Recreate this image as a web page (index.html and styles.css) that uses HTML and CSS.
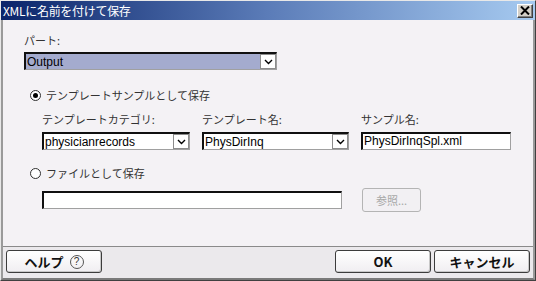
FILE: index.html
```html
<!DOCTYPE html>
<html lang="ja">
<head>
  <meta charset="UTF-8" />
  <title>XMLに名前を付けて保存</title>
  <link rel="stylesheet" href="styles.css">
</head>
<body>

<div class="window">

  <div class="titlebar">
    <span class="title">XMLに名前を付けて保存</span>
    <button class="close-btn" title="閉じる">
      <svg width="10" height="9" viewBox="0 0 10 9">
        <path d="M1 0.5 L9 8.5 M9 0.5 L1 8.5" stroke="#000" stroke-width="2" fill="none" />
      </svg>
    </button>
  </div>

  <div class="main">
    <div class="content">

      <!-- Part selector -->
      <div class="label">パート:</div>
      <div class="select part-select selected">
        <span class="select-text">Output</span>
        <span class="arrow">
          <svg width="9" height="6" viewBox="0 0 9 6"><path d="M1 1 L4.5 4.5 L8 1" stroke="#000" stroke-width="1.4" fill="none" /></svg>
        </span>
      </div>

      <!-- Save as template sample -->
      <div class="radio-row first-radio">
        <span class="radio checked"></span>
        <span>テンプレートサンプルとして保存</span>
      </div>

      <div class="sample-grid">
        <div class="label">テンプレートカテゴリ:</div>
        <div class="label">テンプレート名:</div>
        <div class="label">サンプル名:</div>

        <div class="select">
          <span class="select-text">physicianrecords</span>
          <span class="arrow">
            <svg width="9" height="6" viewBox="0 0 9 6"><path d="M1 1 L4.5 4.5 L8 1" stroke="#000" stroke-width="1.4" fill="none" /></svg>
          </span>
        </div>
        <div class="select">
          <span class="select-text">PhysDirInq</span>
          <span class="arrow">
            <svg width="9" height="6" viewBox="0 0 9 6"><path d="M1 1 L4.5 4.5 L8 1" stroke="#000" stroke-width="1.4" fill="none" /></svg>
          </span>
        </div>
        <div class="textbox">PhysDirInqSpl.xml</div>
      </div>

      <!-- Save as file -->
      <div class="radio-row second-radio">
        <span class="radio"></span>
        <span>ファイルとして保存</span>
      </div>

      <div class="file-row">
        <div class="textbox file-box"></div>
        <button class="browse-btn" disabled>参照...</button>
      </div>

    </div>

    <div class="footer">
      <button class="btn">ヘルプ <span class="help-icon">?</span></button>
      <div class="spacer"></div>
      <button class="btn">OK</button>
      <button class="btn">キャンセル</button>
    </div>
  </div>

</div>

</body>
</html>
```

FILE: styles.css
```css
body {
  margin: 0;
  font-family: "Noto Sans CJK JP", "Liberation Sans", sans-serif;
  font-size: 11px;
  color: #000;
  background: #d4d0c8;
}

.window {
  box-sizing: border-box;
  width: 536px;
  height: 281px;
  display: flex;
  flex-direction: column;
  background: #d4d0c8;
  border-top: 1px solid #e8e8e8;
  border-left: 1px solid #e8e8e8;
  border-right: 1px solid #404040;
  border-bottom: 1px solid #404040;
}

.titlebar {
  height: 19px;
  display: flex;
  align-items: center;
  justify-content: space-between;
  padding: 0 2px 0 2px;
  background: linear-gradient(to right, #0a246a 0%, #5b7cb8 50%, #a6caf0 100%);
}

.title {
  color: #fff;
  font-size: 12px;
  letter-spacing: -0.3px;
  line-height: 19px;
}

.close-btn {
  width: 16px;
  height: 14px;
  padding: 0;
  display: flex;
  align-items: center;
  justify-content: center;
  background: #d4d0c8;
  border: 1px solid;
  border-color: #fff #404040 #404040 #fff;
  box-shadow: inset -1px -1px 0 #808080;
}

.main {
  flex: 1;
  display: flex;
  flex-direction: column;
  border-left: 2px solid #9a9a9a;
  border-right: 2px solid #9a9a9a;
  border-bottom: 2px solid #7a7a7a;
}

.content {
  flex: 1;
  background: #f4f2f5;
  padding: 13px 0 0 21px;
}

.label {
  height: 14px;
  line-height: 14px;
  color: #333;
}

.select {
  box-sizing: border-box;
  height: 18px;
  display: flex;
  align-items: center;
  background: #fff;
  border: 1px solid #a0a0a0;
  border-top: 2px solid #101010;
  border-left: 2px solid #101010;
  font-family: "Liberation Sans", sans-serif;
  font-size: 12px;
}

.select-text {
  flex: 1;
  padding-left: 1px;
  line-height: 14px;
}

.select .arrow {
  box-sizing: border-box;
  width: 16px;
  height: 15px;
  display: flex;
  align-items: center;
  justify-content: center;
  background: #fff;
  border: 1px solid #8c8c8c;
}

.part-select {
  width: 253px;
  margin-top: 5px;
}

.selected {
  background: #a4abce;
}

.radio-row {
  display: flex;
  align-items: center;
  gap: 5px;
  height: 14px;
  padding-left: 6px;
  color: #333;
}

.first-radio {
  margin-top: 18px;
}

.second-radio {
  margin-top: 16px;
}

.radio {
  box-sizing: border-box;
  width: 11px;
  height: 11px;
  border: 1px solid #303030;
  border-radius: 50%;
  background: #fff;
  display: flex;
  align-items: center;
  justify-content: center;
}

.radio.checked::after {
  content: "";
  width: 5px;
  height: 5px;
  border-radius: 50%;
  background: #000;
}

.sample-grid {
  display: grid;
  grid-template-columns: 148px 147px 150px;
  column-gap: 12px;
  row-gap: 6px;
  margin-top: 10px;
  padding-left: 18px;
}

.textbox {
  box-sizing: border-box;
  height: 18px;
  background: #fff;
  border: 1px solid #a0a0a0;
  border-top: 2px solid #101010;
  border-left: 2px solid #101010;
  font-family: "Liberation Sans", sans-serif;
  font-size: 12px;
  line-height: 14px;
  padding-left: 1px;
}

.file-row {
  display: flex;
  align-items: center;
  gap: 20px;
  margin-top: 8px;
  padding-left: 18px;
}

.file-box {
  width: 300px;
}

.browse-btn {
  width: 59px;
  height: 24px;
  padding: 0;
  font-family: "Noto Sans CJK JP", sans-serif;
  font-size: 11px;
  color: #a8a8a8;
  background: #f2f0f3;
  border: 1px solid #b4b4b4;
  border-radius: 3px;
}

.footer {
  height: 28px;
  display: flex;
  align-items: flex-start;
  gap: 3px;
  padding: 3px 3px 0 3px;
  background: #ebe9ec;
  border-top: 1px solid #8a8a8a;
}

.spacer {
  flex: 1;
}

.btn {
  width: 96px;
  height: 23px;
  padding: 0;
  display: flex;
  align-items: center;
  justify-content: center;
  gap: 6px;
  font-family: "Noto Sans CJK JP", "Liberation Sans", sans-serif;
  font-size: 13px;
  font-weight: bold;
  color: #111;
  background: linear-gradient(#ffffff, #f0eef1);
  border: 1px solid #3c3c3c;
  border-radius: 3px;
  box-shadow: inset -1px -1px 0 #c8c8c8;
}

.help-icon {
  box-sizing: border-box;
  width: 14px;
  height: 14px;
  border: 1px solid #555;
  border-radius: 50%;
  font-family: "Liberation Sans", sans-serif;
  font-size: 10px;
  font-weight: normal;
  line-height: 12px;
  text-align: center;
  color: #333;
}
```
